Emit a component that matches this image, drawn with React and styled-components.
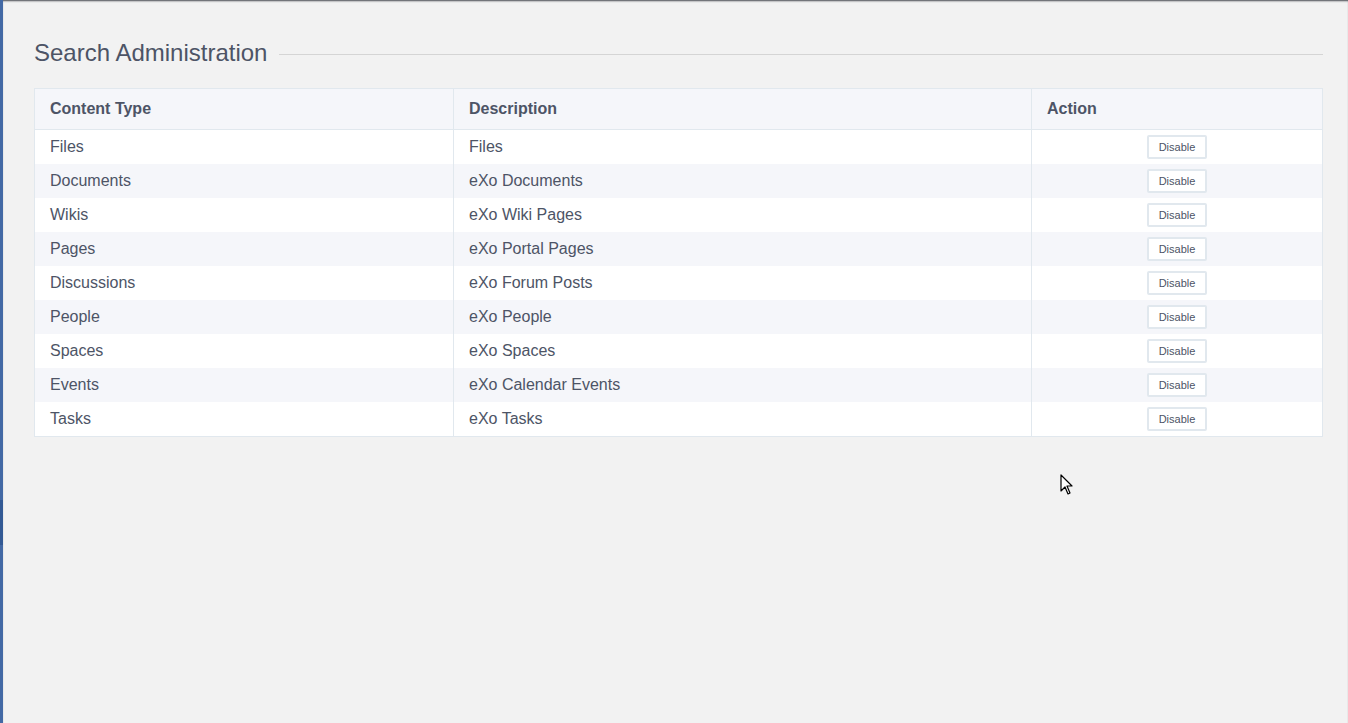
import React from 'react'
import styled, { createGlobalStyle } from 'styled-components'

const GlobalStyle = createGlobalStyle`
  html, body {
    margin: 0;
    padding: 0;
    background: #f2f2f2;
  }
  body {
    font-family: "Liberation Sans", Arial, sans-serif;
    color: #4d5466;
  }
`

const Page = styled.div`
  position: relative;
  min-height: 723px;
  box-sizing: border-box;
  background: #f2f2f2;
  border-left: 3px solid #4369a5;
  box-shadow: inset 0 2px 2px -1px rgba(40, 44, 52, 0.85);
  padding: 35px 25px 0 31px;
`

const SideMark = styled.div`
  position: absolute;
  left: -3px;
  top: 500px;
  width: 3px;
  height: 45px;
  background: #335a95;
`

const TitleRow = styled.div`
  display: flex;
  align-items: center;
  gap: 12px;
  margin-bottom: 17px;
`

const Title = styled.h3`
  margin: 0;
  font-size: 24px;
  font-weight: normal;
  color: #4d5466;
  line-height: 36px;
  white-space: nowrap;
`

const Rule = styled.div`
  flex: 1;
  height: 1px;
  background: #d5d5d5;
  margin-top: 3px;
`

const Table = styled.table`
  width: 100%;
  border-collapse: collapse;
  border: 1px solid #e1e8ee;
  background: #fff;
  table-layout: fixed;
`

const HeadCell = styled.th`
  box-sizing: border-box;
  text-align: left;
  font-size: 16px;
  font-weight: bold;
  color: #4d5466;
  background: #f5f6fa;
  height: 41px;
  padding: 0 15px;
  border: 1px solid #e1e8ee;
  width: ${p => p.$w};
`

const Row = styled.tr`
  background: ${p => (p.$odd ? '#f5f6fa' : '#ffffff')};
`

const Cell = styled.td`
  font-size: 16px;
  color: #4d5466;
  height: 34px;
  padding: 0 15px;
  border-left: 1px solid #e1e8ee;
  border-right: 1px solid #e1e8ee;
  text-align: ${p => (p.$center ? 'center' : 'left')};
`

const Button = styled.button`
  font-family: "Liberation Sans", Arial, sans-serif;
  font-size: 11px;
  color: #4d5466;
  background: #fff;
  border: 2px solid #e1e8ee;
  border-radius: 2px;
  height: 24px;
  width: 60px;
  padding: 0;
  margin-bottom: 1px;
  cursor: pointer;
  vertical-align: middle;
`

const Pointer = styled.svg`
  position: absolute;
  left: 1055px;
  top: 474px;
`

const rows = [
  ['Files', 'Files'],
  ['Documents', 'eXo Documents'],
  ['Wikis', 'eXo Wiki Pages'],
  ['Pages', 'eXo Portal Pages'],
  ['Discussions', 'eXo Forum Posts'],
  ['People', 'eXo People'],
  ['Spaces', 'eXo Spaces'],
  ['Events', 'eXo Calendar Events'],
  ['Tasks', 'eXo Tasks'],
]

const App = () => {
  return (
    <Page>
      <GlobalStyle />
      <SideMark />
      <TitleRow>
        <Title>Search Administration</Title>
        <Rule />
      </TitleRow>
      <Table>
        <thead>
          <tr>
            <HeadCell $w="419px">Content Type</HeadCell>
            <HeadCell $w="578px">Description</HeadCell>
            <HeadCell>Action</HeadCell>
          </tr>
        </thead>
        <tbody>
          {rows.map(([type, desc], i) => (
            <Row key={type} $odd={i % 2 === 1}>
              <Cell>{type}</Cell>
              <Cell>{desc}</Cell>
              <Cell $center>
                <Button>Disable</Button>
              </Cell>
            </Row>
          ))}
        </tbody>
      </Table>
      <Pointer width="16" height="22" viewBox="0 0 16 22">
        <path d="M3 1 L3 17 L7 13 L10 20 L12 19 L9 12 L14 12 Z" fill="#fff" stroke="#000" strokeWidth="1.2" strokeLinejoin="round" />
      </Pointer>
    </Page>
  )
}

export default App
